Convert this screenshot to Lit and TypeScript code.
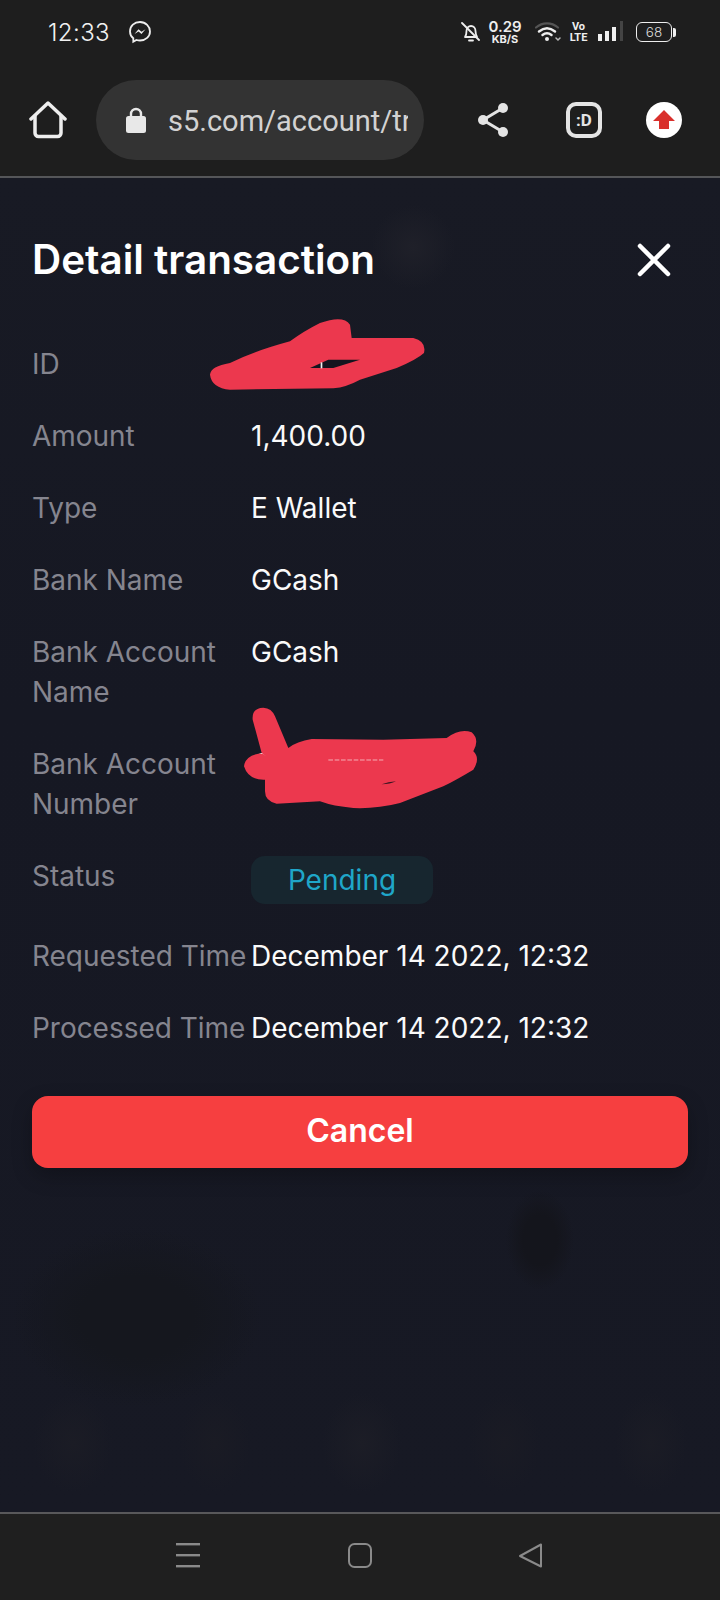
import { LitElement, html, css, svg } from "lit";
import { customElement } from "lit/decorators.js";

interface Row { label: string; value?: string; status?: boolean; }
const rows: Row[] = [
  { label: "ID", value: "" },
  { label: "Amount", value: "1,400.00" },
  { label: "Type", value: "E Wallet" },
  { label: "Bank Name", value: "GCash" },
  { label: "Bank Account Name", value: "GCash" },
  { label: "Bank Account Number", value: "" },
  { label: "Status", status: true },
  { label: "Requested Time", value: "December 14 2022, 12:32" },
  { label: "Processed Time", value: "December 14 2022, 12:32" },
];

@customElement("app-root")
export class AppRoot extends LitElement {
  static styles = css`
    :host { display: block; width: 720px; height: 1600px; font-family: Inter, "Liberation Sans", sans-serif; color: #fff; }
    .screen { position: relative; width: 720px; height: 1600px; display: flex; flex-direction: column; background: #1f1f1f; overflow: hidden; }
    .top { height: 176px; flex: none; display: flex; flex-direction: column; background: #1e1e1e; }
    .status { height: 64px; flex: none; display: flex; align-items: center; padding: 0 44px 0 48px; }
    .time { font-size: 24px; font-weight: 300; letter-spacing: 0.4px; color: #f2f2f2; margin-right: 18px; }
    .status-right { margin-left: auto; display: flex; align-items: center; }
    .speed { display: flex; flex-direction: column; align-items: center; color: #eee; margin: 0 14px 0 8px; width: 32px; }
    .speed b { font-size: 15px; line-height: 14px; font-weight: 600; }
    .speed i { font-style: normal; font-size: 11px; line-height: 11px; font-weight: 700; }
    .volte { display: flex; flex-direction: column; align-items: center; font-family: Roboto, sans-serif; font-size: 11px; line-height: 11px; font-weight: 700; color: #eee; margin: 0 12px 0 10px; width: 15px; }
    .battery { display: flex; align-items: center; margin-left: 12px; }
    .battery span { width: 36px; height: 20px; box-sizing: border-box; border: 1.5px solid #eee; border-radius: 6px; font-size: 13.5px; font-weight: 300; color: #ddd; display: flex; align-items: center; justify-content: center; }
    .battery em { width: 3px; height: 9px; background: #eee; border-radius: 0 2px 2px 0; margin-left: 1px; }
    .toolbar { flex: 1; display: flex; align-items: flex-start; padding-top: 16px; }
    .home { width: 96px; height: 80px; display: flex; align-items: center; justify-content: center; flex: none; }
    .pill { width: 328px; height: 80px; flex: none; box-sizing: border-box; border-radius: 40px; background: #333333; display: flex; align-items: center; padding: 0 16px 0 30px; }
    .pill .url { margin-left: 22px; padding-top: 2px; overflow: hidden; white-space: nowrap; font-family: Roboto, sans-serif; font-size: 29px; color: #d2d2d2; flex: 1; }
    .actions { flex: 1; display: flex; align-items: center; height: 80px; padding-left: 54px; }
    .actions .d { width: 36px; height: 36px; box-sizing: border-box; border: 4px solid #e4e4e4; border-radius: 10px; display: flex; align-items: center; justify-content: center; font-family: Roboto, sans-serif; font-size: 17px; font-weight: 700; color: #e4e4e4; margin: 0 44px 0 58px; }
    .hair { height: 2px; flex: none; background: #555659; }
    .main { flex: 1; box-sizing: border-box; padding: 59px 32px 0; display: flex; flex-direction: column;
      background:
        radial-gradient(circle at 413px 69px, #1f2029 0, rgba(31,32,41,0) 42px),
        radial-gradient(ellipse 125px 90px at 137px 1139px, #15171e 0, #15171e 45%, rgba(21,23,30,0) 100%),
        radial-gradient(ellipse 34px 50px at 540px 1062px, #14151c 0, #14151c 50%, rgba(20,21,28,0) 100%),
        radial-gradient(ellipse 40px 50px at 73px 1265px, #1b1c25 0, rgba(27,28,37,0) 100%),
        radial-gradient(ellipse 36px 50px at 215px 1265px, #1a1b24 0, rgba(26,27,36,0) 100%),
        radial-gradient(ellipse 40px 50px at 362px 1265px, #1c1d26 0, rgba(28,29,38,0) 100%),
        radial-gradient(ellipse 36px 50px at 505px 1265px, #1a1b24 0, rgba(26,27,36,0) 100%),
        radial-gradient(ellipse 36px 50px at 651px 1265px, #1b1c25 0, rgba(27,28,37,0) 100%),
        linear-gradient(180deg, #181a24 0%, #161823 40%, #171924 100%); }
    .head { display: flex; align-items: center; justify-content: space-between; height: 46px; }
    h1 { margin: 0; font-size: 40.4px; line-height: 46px; font-weight: 600; color: #fff; }
    .close { display: block; margin-right: 17px; }
    .list { margin-top: 61px; display: flex; flex-direction: column; gap: 32px; }
    .row { display: flex; font-size: 28px; line-height: 40px; }
    .label { width: 219px; flex: none; color: #85858f; letter-spacing: -0.03px; }
    .value { color: #fafafa; white-space: nowrap; min-height: 40px; }
    .badge { width: 182px; height: 48px; border-radius: 14px; background: #17262f; color: #1fa6c9; display: flex; align-items: center; justify-content: center; box-sizing: border-box; }
    .cancel { margin-top: 48px; height: 72px; padding: 0 0 3px; border: 0; border-radius: 16px; background: #f63f40; color: #fff; font-family: inherit; font-size: 32px; font-weight: 600; box-shadow: 0 8px 20px rgba(0,0,0,0.25); }
    .nav { height: 86px; flex: none; display: flex; align-items: center; background: #1f1f1f; border-top: 2px solid #58585a; }
    .nav-row { width: 100%; display: flex; justify-content: space-between; padding: 0 172px 2px; box-sizing: border-box; }
    .scribble { position: absolute; display: block; }
  `;

  private redact1() {
    return svg`<path fill="#ec384e" d="M630 225 Q632 200 690 190 Q760 155 870 125 Q910 95 960 70 Q1030 45 1050 75 L1055 115 L1240 115 Q1280 125 1272 160 Q1250 180 1190 205 L1080 240 Q1040 262 1000 266 L690 270 Q635 265 630 225 Z"/>
    <path fill="#14151f" d="M930 205 L985 180 L1080 180 L1000 205 Z"/><rect x="962" y="188" width="5" height="18" fill="#f2f2f2"/>`;
  }
  private redact2() {
    return svg`<path fill="#ec384e" d="M758 90 Q755 55 790 54 Q815 55 825 80 L865 175 Q890 155 935 148 L1150 150 L1340 145 Q1380 115 1415 128 Q1440 150 1420 185 Q1442 205 1420 240 Q1370 270 1330 290 L1200 340 Q1130 358 1060 355 Q1000 350 960 335 L830 342 Q795 335 795 305 L795 270 Q745 272 732 230 Q735 200 775 192 L785 190 Z"/>
    <path d="M775 191 Q788 190 798 200 L785 190 Z" fill="#fff"/>
    <path d="M985 211 H1150" stroke="#fbe9ea" stroke-width="2" stroke-dasharray="14 5"/>
    <path d="M1145 284 Q1165 276 1188 275 Q1170 284 1145 284 Z" fill="#3a1522"/>`;
  }

  render() {
    return html`<div class="screen">
      <div class="top">
        <div class="status">
          <span class="time">12:33</span>
          <svg width="24" height="24" viewBox="0 0 24 24" fill="none"><path d="M12 2C6.300 2 2 6.100 2 11.400c0 2.900 1.200 5.200 3.300 6.900v3.400l3.100-1.700c1.100.3 2.300.5 3.600.5 5.700 0 10-4.100 10-9.100S17.700 2 12 2Z" stroke="#eee" stroke-width="1.800"/><path d="M6.500 14l4-4.800 3 2.500 4-2.500-4 4.800-3-2.500z" fill="#eee"/></svg>
          <div class="status-right">
            <svg width="20" height="24" viewBox="0 0 20 24" fill="none" stroke="#eee" stroke-width="1.800" stroke-linecap="round" stroke-linejoin="round"><path d="M4 17c1.500-2 1.500-3 1.500-6 0-3 2-5 4.500-5s4.500 2 4.500 5c0 3 .5 4 1.500 6Z"/><path d="M1 3l17 17M8 20.500h4"/></svg>
            <div class="speed"><b>0.29</b><i>KB/S</i></div>
            <svg width="26" height="22" viewBox="0 0 26 22" fill="none" stroke-linecap="round"><path d="M1 6.500C7.500 1 16.500 1 23 6.500" stroke="#555" stroke-width="2.200"/><path d="M4 10.500c5-4 11-4 16 0" stroke="#eee" stroke-width="2.500"/><path d="M7.500 14c3-2.300 6-2.300 9 0" stroke="#eee" stroke-width="2.500"/><circle cx="12" cy="18" r="2" fill="#eee"/><path d="M21 17l2 2 2-2" stroke="#bbb" stroke-width="1.500"/></svg>
            <div class="volte"><span>Vo</span><span>LTE</span></div>
            <svg width="26" height="22" viewBox="0 0 26 22"><rect x="0" y="13" width="4" height="7" fill="#eee"/><rect x="7" y="10" width="4" height="10" fill="#eee"/><rect x="14" y="6" width="4" height="14" fill="#eee"/><rect x="22" y="0" width="3" height="20" fill="#444"/></svg>
            <div class="battery"><span>68</span><em></em></div>
          </div>
        </div>
        <div class="toolbar">
          <div class="home">
            <svg width="38" height="38" viewBox="0 0 38 38" fill="none" stroke="#eeeeee" stroke-width="3.500" stroke-linecap="round" stroke-linejoin="round"><path d="M2 18 19 2l17 16"/><path d="M6 15v17a3.500 3.500 0 0 0 3.500 3.500h19a3.500 3.500 0 0 0 3.500-3.500V15"/></svg>
          </div>
          <div class="pill">
            <svg width="20" height="26" viewBox="0 0 20 26"><path d="M5 10V7a5 5 0 0 1 10 0v3" fill="none" stroke="#e8e8e8" stroke-width="2.400"/><rect x="0" y="9" width="20" height="17" rx="2.500" fill="#e8e8e8"/></svg>
            <span class="url">s5.com/account/tr</span>
          </div>
          <div class="actions">
            <svg width="30" height="34" viewBox="0 0 30 34" fill="none"><path d="M25 5 5 17l20 12" stroke="#e4e4e4" stroke-width="3"/><circle cx="25" cy="5" r="5" fill="#e4e4e4"/><circle cx="5" cy="17" r="5" fill="#e4e4e4"/><circle cx="25" cy="29" r="5" fill="#e4e4e4"/></svg>
            <div class="d">:D</div>
            <svg width="36" height="36" viewBox="0 0 36 36"><circle cx="18" cy="18" r="18" fill="#fff"/><path d="M18 8 29 19h-6v8H13v-8H7Z" fill="#d9302c"/></svg>
          </div>
        </div>
      </div>
      <div class="hair"></div>
      <div class="main">
        <div class="head">
          <h1>Detail transaction</h1>
          <svg class="close" width="34" height="34" viewBox="0 0 34 34" fill="none" stroke="#fff" stroke-width="4.500" stroke-linecap="round"><path d="M3 3l28 28M31 3 3 31"/></svg>
        </div>
        <div class="list">
          ${rows.map((r) => html`<div class="row">
            <div class="label">${r.label}</div>
            ${r.status ? html`<div class="badge">Pending</div>` : html`<div class="value">${r.value}</div>`}
          </div>`)}
        </div>
        <button class="cancel">Cancel</button>
      </div>
      <div class="nav">
        <div class="nav-row">
          <svg width="32" height="26" viewBox="0 0 32 26" fill="#8a8a8a"><rect x="4" y="0" width="24" height="2.400"/><rect x="4" y="11" width="24" height="2.400"/><rect x="4" y="22" width="24" height="2.400"/></svg>
          <svg width="32" height="26" viewBox="0 0 32 26" fill="none" stroke="#8a8a8a" stroke-width="2"><rect x="5" y="1" width="22" height="23" rx="5.500"/></svg>
          <svg width="32" height="26" viewBox="0 0 32 26" fill="none" stroke="#8a8a8a" stroke-width="2" stroke-linejoin="round"><path d="M25 1.500v22L4 13Z"/></svg>
        </div>
      </div>
      <svg class="scribble" style="left:200px;top:313.330px" width="233.330" height="80" viewBox="600 40 700 240">${this.redact1()}</svg>
      <svg class="scribble" style="left:240px;top:703.330px" width="243.330" height="113.330" viewBox="720 40 730 340">${this.redact2()}</svg>
    </div>`;
  }
}
